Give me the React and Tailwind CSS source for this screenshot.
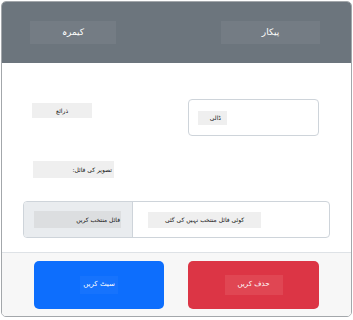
import React from 'react';

const font = { fontFamily: '"DejaVu Sans", "Noto Sans", sans-serif' };

export default function App() {
    return (
        <div className="w-[353px] h-[320px] bg-white p-[1px] pb-[3px]" style={font}>
            <div className="h-full border border-[#a3a7ab] rounded-[5px] overflow-hidden flex flex-col">
                {/* ہیڈر */}
                <div className="h-[61px] bg-[#6c757d] flex items-center pl-[28px] pr-[31px] justify-between shrink-0">
                    <div className="w-[86px] h-[23px] bg-[#747c84] flex items-center justify-center text-[9px] text-white" dir="rtl">
                        کیمرہ
                    </div>
                    <div className="w-[99px] h-[23px] bg-[#747c84] flex items-center justify-center text-[9px] text-white" dir="rtl">
                        پیکار
                    </div>
                </div>

                {/* فارم */}
                <div className="flex-1 flex flex-col pl-[21px] pr-[21px] pt-[36px]">
                    <div className="flex items-start justify-between pl-[9px] pr-[11px]">
                        <div className="mt-[4px] w-[60px] h-[15px] bg-[#efefef] flex items-center justify-center text-[6px] text-[#111]" dir="rtl">
                            ذرائع
                        </div>
                        <div className="w-[131px] h-[37px] border border-[#ced4da] rounded-[4px] flex items-center px-[9px]">
                            <div className="w-[29px] h-[14px] bg-[#efefef] flex items-center justify-start pr-[6px] text-[6px] text-[#111]" dir="rtl">
                                ڈالی
                            </div>
                        </div>
                    </div>
                    <div className="mt-[25px] ml-[10px] w-[81px] h-[17px] bg-[#efefef] flex items-center justify-start pr-[2px] text-[6px] text-[#111]" dir="rtl">
                        تصویر کی فائل:
                    </div>
                    <div className="mt-[23px] h-[37px] border border-[#ced4da] rounded-[4px] flex overflow-hidden">
                        <div className="w-[109px] bg-[#e9ecef] border-r border-[#ced4da] flex items-center pl-[10px]">
                            <div className="w-[87px] h-[17px] bg-[#dcdee0] flex items-center justify-start pr-[1px] text-[6px] text-[#111]" dir="rtl">
                                فائل منتخب کریں
                            </div>
                        </div>
                        <div className="flex-1 flex items-center pl-[15px]">
                            <div className="w-[113px] h-[16px] bg-[#efefef] flex items-center justify-center text-[6px] text-[#111]" dir="rtl">
                                کوئی فائل منتخب نہیں کی گئی
                            </div>
                        </div>
                    </div>
                </div>

                {/* فوٹر */}
                <div className="h-[64px] shrink-0 bg-[#f7f7f7] border-t border-[#dee2e6] flex items-center justify-between pl-[32px] pr-[32px]">
                    <div className="w-[130px] h-[48px] bg-[#0d6efd] rounded-[5px] flex items-center justify-center">
                        <div className="px-[3px] h-[18px] bg-[#1673fd] flex items-center text-[7px] text-white" dir="rtl">
                            سیٹ کریں
                        </div>
                    </div>
                    <div className="w-[131px] h-[48px] bg-[#dc3545] rounded-[5px] flex items-center justify-center">
                        <div className="w-[58px] h-[20px] bg-[#e04653] flex items-center justify-center text-[7px] text-white" dir="rtl">
                            حذف کریں
                        </div>
                    </div>
                </div>
            </div>
        </div>
    );
}
